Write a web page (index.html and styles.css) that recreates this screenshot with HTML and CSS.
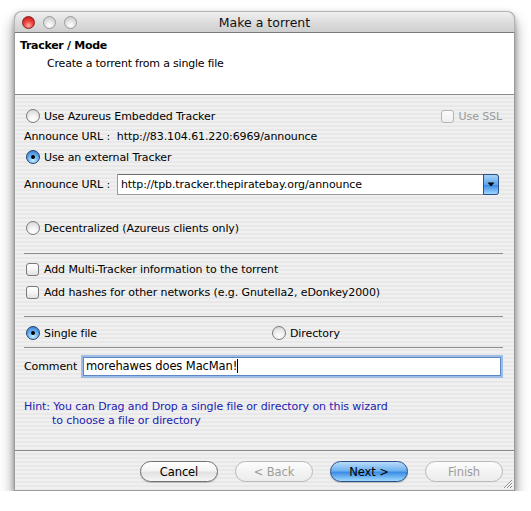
FILE: index.html
```html
<!DOCTYPE html>
<html>
<head>
<meta charset="utf-8">
<link rel="stylesheet" href="styles.css">
</head>
<body>
<div class="page">
  <div class="window">
    <div class="titlebar">
      <div class="lights">
        <span class="light red"></span>
        <span class="light"></span>
        <span class="light"></span>
      </div>
      <div class="title">Make a torrent</div>
      <div></div>
    </div>
    <div class="header">
      <div class="h-title">Tracker / Mode</div>
      <div class="h-sub">Create a torrent from a single file</div>
    </div>
    <div class="content">
      <div class="row r1">
        <label class="opt"><span class="radio"></span>Use Azureus Embedded Tracker</label>
        <label class="opt disabled"><span class="check dim"></span>Use SSL</label>
      </div>
      <div class="row r2">Announce URL :&nbsp; http://83.104.61.220:6969/announce</div>
      <div class="row r3">
        <label class="opt"><span class="radio on"></span>Use an external Tracker</label>
      </div>
      <div class="row r4">
        <span class="lbl-url">Announce URL :</span>
        <div class="combo">
          <span class="combo-text">http://tpb.tracker.thepiratebay.org/announce</span>
          <span class="combo-btn"><svg width="8" height="5" viewBox="0 0 8 5"><path d="M0.5 0.5h7L4 4.5z" fill="#000"/></svg></span>
        </div>
      </div>
      <div class="row r5">
        <label class="opt"><span class="radio"></span>Decentralized (Azureus clients only)</label>
      </div>
      <div class="sep s1"></div>
      <div class="row r6">
        <label class="opt"><span class="check"></span>Add Multi-Tracker information to the torrent</label>
      </div>
      <div class="row r7">
        <label class="opt"><span class="check"></span>Add hashes for other networks (e.g. Gnutella2, eDonkey2000)</label>
      </div>
      <div class="sep s2"></div>
      <div class="row r8 mode">
        <label class="opt"><span class="radio on"></span>Single file</label>
        <label class="opt"><span class="radio"></span>Directory</label>
      </div>
      <div class="sep s3"></div>
      <div class="row r9">
        <span class="lbl-comment">Comment</span>
        <div class="input"><span>morehawes does MacMan</span><span class="caret">!</span></div>
      </div>
      <div class="hint">
        <div>Hint: You can Drag and Drop a single file or directory on this wizard</div>
        <div class="hint2">to choose a file or directory</div>
      </div>
    </div>
    <div class="footer">
      <button class="btn">Cancel</button>
      <button class="btn disabled">&lt; Back</button>
      <button class="btn default">Next &gt;</button>
      <button class="btn disabled">Finish</button>
    </div>
    <svg class="grip" width="12" height="12" viewBox="0 0 12 12">
      <path d="M11 3L3 11M11 6L6 11M11 9L9 11" stroke="#8a8a8a" stroke-width="1"/>
      <path d="M11 4L4 11M11 7L7 11M11 10L10 11" stroke="#fff" stroke-width="1"/>
    </svg>
  </div>
</div>
</body>
</html>
```
FILE: styles.css
```css
* { box-sizing: border-box; }
body {
  margin: 0;
  background: #fff;
  font-family: "DejaVu Sans", "Liberation Sans", sans-serif;
  font-size: 11px;
  letter-spacing: -0.1px;
  color: #000;
}
.page { padding: 11px 0 0 14px; }
.window {
  position: relative;
  width: 501px;
  height: 480px;
  display: flex;
  flex-direction: column;
  border-radius: 8px 8px 0 0;
  border: 1px solid #9c9c9c;
  border-top: none;
  background: repeating-linear-gradient(to bottom, #f0f0f0 0 2px, #e8e8e8 2px 4px);
  box-shadow: 0 9px 14px rgba(0,0,0,0.45), 0 2px 5px rgba(0,0,0,0.25);
}
.titlebar {
  height: 22px;
  flex: none;
  margin: 0 -1px;
  border-radius: 8px 8px 0 0;
  border: 1px solid #b5b5b5;
  border-bottom: 1px solid #7a7a7a;
  background: linear-gradient(#f0f0f0, #dadada 60%, #cfcfcf);
  display: grid;
  grid-template-columns: 1fr auto 1fr;
  align-items: center;
}
.lights { display: flex; gap: 8px; padding-left: 7px; }
.light {
  width: 13px; height: 13px; border-radius: 50%;
  border: 1px solid #9a9a9a;
  background: radial-gradient(circle at 50% 75%, #ffffff 0, #e4e4e4 45%, #c2c2c2 100%);
}
.light.red {
  border-color: #8b1c1c;
  background: radial-gradient(circle at 50% 78%, #ffb0a8 0, #f0403a 45%, #b8191a 100%);
}
.title {
  font-size: 12.5px;
  letter-spacing: 0;
  color: #111;
}
.header {
  flex: none;
  height: 62px;
  background: #fff;
  border-bottom: 1px solid #8a8a8a;
  padding: 5px 0 0 5px;
}
.h-title { font-weight: bold; line-height: 15px; letter-spacing: -0.3px; }
.h-sub { line-height: 15px; margin-top: 3px; padding-left: 27px; letter-spacing: -0.2px; }
.content {
  flex: 1;
  display: flex;
  flex-direction: column;
  padding: 0 10px 0 9px;
}
.row { display: flex; align-items: center; height: 20px; flex: none; }
.opt { display: flex; align-items: center; }
.r1 { margin-top: 11px; justify-content: space-between; }
.r3 { margin-top: 1px; }
.r4 { margin-top: 7px; height: 21px; }
.r5 { margin-top: 23px; }
.r6 { margin-top: 5px; }
.r7 { margin-top: 3px; }
.r8 { margin-top: 6px; }
.r9 { margin-top: 8px; height: 20px; }
.sep { height: 1px; background: #8e8e8e; flex: none; margin-right: 1px; }
.s1 { margin-top: 15px; }
.s2 { margin-top: 14px; }
.s3 { margin-top: 4px; }
.radio {
  position: relative;
  width: 14px; height: 14px; flex: none;
  border-radius: 50%;
  border: 1px solid #7a7a7a;
  background: radial-gradient(circle at 50% 80%, #ffffff 0, #f2f2f2 40%, #cfcfcf 100%);
  margin: 0 4px 0 2px;
}
.radio.on {
  border-color: #23406f;
  background: radial-gradient(circle at 50% 78%, #c9ecff 0, #6cb5f2 45%, #2d6fc4 100%);
}
.radio.on::after {
  content: "";
  position: absolute;
  left: 4px; top: 4px;
  width: 4px; height: 4px;
  border-radius: 50%;
  background: #000;
}
.check {
  width: 13px; height: 13px; flex: none;
  border-radius: 3px;
  border: 1px solid #7a7a7a;
  background: linear-gradient(#ffffff, #f4f4f4 50%, #e2e2e2);
  margin: 0 5px 0 2px;
}
.check.dim { border-color: #b4b4b4; background: linear-gradient(#fbfbfb, #efefef); }
.disabled { color: #9a9a9a; }
.r1 .opt.disabled { margin-right: 2px; }
.lbl-url { width: 93px; flex: none; }
.combo {
  flex: 1;
  height: 21px;
  display: flex;
  align-items: stretch;
  background: #fff;
  border: 1px solid #9a9a9a;
  border-top-color: #6e6e6e;
  border-radius: 0 4px 4px 0;
  margin-right: 5px;
}
.combo-text { flex: 1; padding-left: 3px; line-height: 19px; }
.combo-btn {
  width: 16px;
  display: flex; align-items: center; justify-content: center;
  border-radius: 0 3px 3px 0;
  background: linear-gradient(#a6d2f7, #5ea8ec 50%, #3c8ce4 55%, #9fd6ff);
  margin: -1px -1px -1px 0;
  border: 1px solid #2d4f8c;
}
.mode { display: grid; grid-template-columns: 246px 1fr; }
.lbl-comment { width: 59px; flex: none; }
.input {
  flex: 1;
  height: 19px;
  background: #fff;
  border: 1px solid #5d86c4;
  box-shadow: 0 0 0 2px #9dbde6;
  padding-left: 2px;
  line-height: 17px;
  font-size: 11.5px;
  margin-right: 3px;
  display: flex;
  align-items: center;
}
.caret { position: relative; }
.caret::after {
  content: "";
  position: absolute;
  right: -1px; top: 1px;
  width: 1px; height: 14px;
  background: #000;
}
.hint {
  margin-top: 24px;
  color: #2222b0;
  line-height: 13.5px;
}
.hint2 { padding-left: 28px; }
.footer {
  flex: none;
  height: 40px;
  border-top: 1px solid #8a8a8a;
  display: flex;
  justify-content: flex-end;
  gap: 17px;
  padding: 10px 11px 0 0;
}
.btn {
  width: 78px;
  height: 21px;
  border-radius: 11px;
  border: 1px solid #707070;
  background: linear-gradient(#ffffff, #f4f4f4 45%, #e2e2e2 55%, #f6f6f6);
  box-shadow: 0 1px 1px rgba(0,0,0,0.2);
  font-family: "DejaVu Sans", sans-serif;
  font-size: 11.5px;
  letter-spacing: -0.1px;
  color: #000;
  padding: 0;
}
.btn.disabled {
  border-color: #b9b9b9;
  color: #9c9c9c;
  background: linear-gradient(#fdfdfd, #f3f3f3 50%, #ececec);
  box-shadow: none;
}
.btn.default {
  border-color: #2b4c86;
  background: linear-gradient(#b9dcfa, #6fb2ef 45%, #3b8de6 55%, #9fd9ff);
}
.grip { position: absolute; right: 1px; bottom: 1px; }
```
